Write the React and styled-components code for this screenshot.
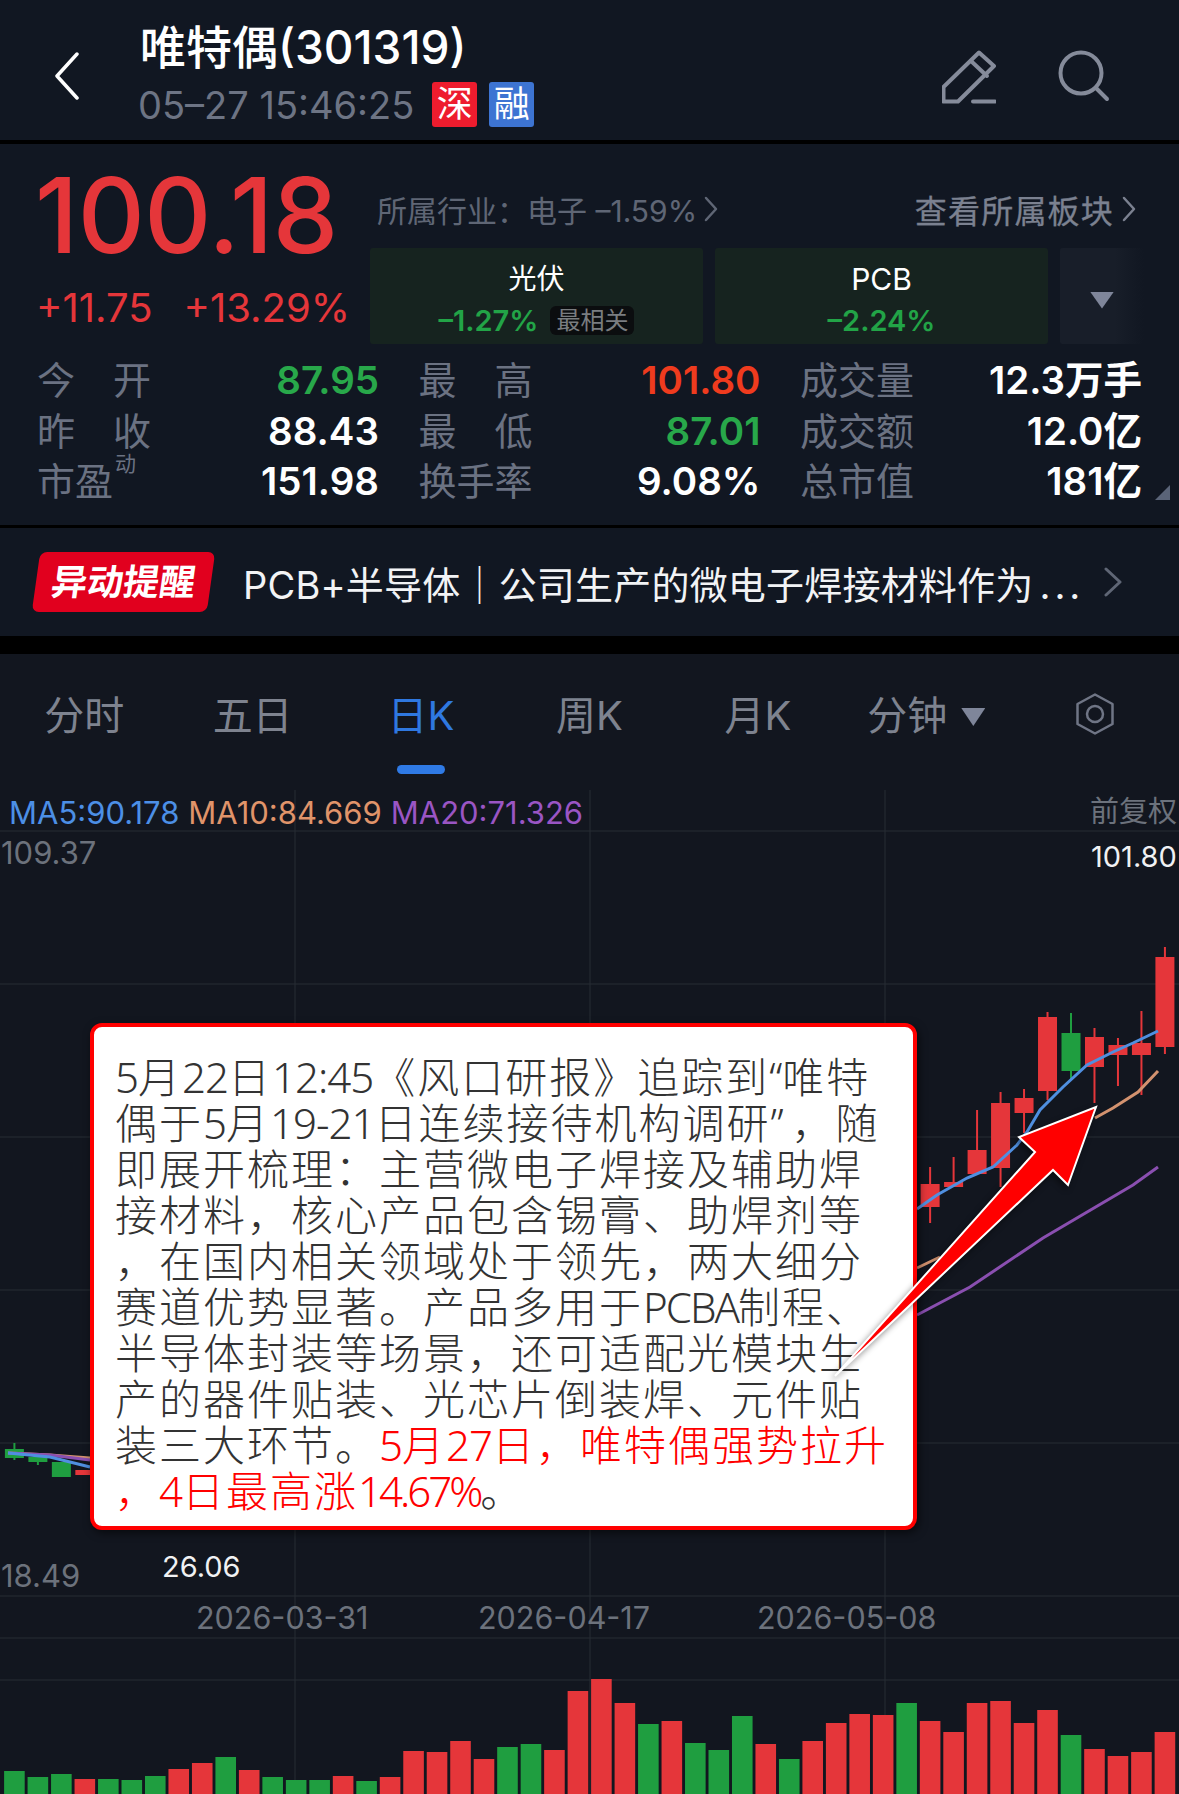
import React from 'react';
import styled, { createGlobalStyle } from 'styled-components';

const sans = `Inter, "Noto Sans CJK SC", sans-serif`;
const RED = '#e5363a';
const GREEN = '#1f9e40';

const GlobalStyle = createGlobalStyle`
  html, body { margin: 0; padding: 0; background: #000; }
  * { box-sizing: border-box; }
`;

const Page = styled.div`
  width: 1179px;
  height: 1794px;
  overflow: hidden;
  background: #000;
  font-family: ${sans};
  display: flex;
  flex-direction: column;
`;

const Header = styled.header`
  height: 140px;
  flex: none;
  background: #111722;
  display: flex;
  align-items: flex-start;
  padding: 20px 69px 0 55px;
`;

const BackIcon = styled.svg`
  width: 24px;
  height: 48px;
  margin: 32px 61px 0 0;
  flex: none;
`;

const TitleBlock = styled.div`
  display: flex;
  flex-direction: column;
  gap: 8px;
`;

const Title = styled.div`
  font-size: 46px;
  line-height: 54px;
  color: #fff;
  font-weight: 500;
  white-space: nowrap;
`;

const SubRow = styled.div`
  display: flex;
  align-items: center;
  height: 45px;
  margin-left: -2px;
`;

const Time = styled.span`
  font-size: 38px;
  color: #6d7484;
  margin-right: 18px;
  white-space: nowrap;
`;

const Badge = styled.span`
  width: 45px;
  height: 45px;
  border-radius: 3px;
  background: ${p => p.$bg};
  color: #fff;
  font-size: 36px;
  line-height: 45px;
  text-align: center;
  margin-right: 12px;
`;

const HeaderIcons = styled.div`
  margin-left: auto;
  display: flex;
  gap: 62px;
  padding-top: 30px;
`;

const IconSvg = styled.svg`
  display: block;
  fill: none;
  stroke: #858b9a;
  stroke-width: 4;
  stroke-linecap: round;
  stroke-linejoin: round;
`;

const SettingIcon = styled(IconSvg)`
  stroke: #6f7585;
  stroke-width: 2.5;
  margin-top: 1px;
`;

const Quote = styled.section`
  height: 381px;
  flex: none;
  margin-top: 4px;
  background: #111722;
  position: relative;
`;

const QuoteTop = styled.div`
  display: flex;
  height: 211px;
`;

const PriceCol = styled.div`
  width: 370px;
  flex: none;
  padding: 21px 0 0 38px;
`;

const Price = styled.div`
  font-size: 104px;
  font-weight: 500;
  line-height: 100px;
  letter-spacing: -0.5px;
  color: ${RED};
  margin-left: -3px;
`;

const ChangeRow = styled.div`
  display: flex;
  gap: 31px;
  margin: 18px 0 0 -2px;
  font-size: 40px;
  line-height: 50px;
  color: ${RED};
  white-space: nowrap;
`;

const InfoCol = styled.div`
  flex: 1;
  padding-top: 45px;
`;

const InfoRow = styled.div`
  height: 40px;
  display: flex;
  align-items: center;
  justify-content: space-between;
  padding: 0 43px 0 7px;
`;

const InfoText = styled.span`
  display: flex;
  align-items: center;
  gap: ${p => p.$gap || 10}px;
  font-size: ${p => p.$size}px;
  color: ${p => p.$color};
  letter-spacing: ${p => p.$ls || 0}px;
  -webkit-text-stroke: ${p => p.$stroke || 0}px ${p => p.$color};
  white-space: nowrap;
`;

const Tags = styled.div`
  display: flex;
  gap: 12px;
  margin-top: 19px;
`;

const Tag = styled.div`
  width: 333px;
  height: 96px;
  background: #16231f;
  border-radius: 3px;
  padding-top: 16px;
  display: flex;
  flex-direction: column;
  align-items: center;
`;

const MoreTag = styled.div`
  width: 84px;
  height: 96px;
  background: linear-gradient(90deg, #181e29 65%, #111722);
  border-radius: 3px;
  padding-top: 8px;
  display: flex;
  align-items: center;
  justify-content: center;
`;

const Caret = styled.i`
  display: block;
  width: ${p => p.$w}px;
  height: ${p => p.$h}px;
  background: #7f869a;
  clip-path: polygon(0 0, 100% 0, 50% 100%);
`;

const TabCaret = styled(Caret)`
  margin-top: 16px;
`;

const TagName = styled.div`
  font-size: ${p => p.$size || 28}px;
  line-height: 30px;
  color: #fff;
`;

const TagChangeRow = styled.div`
  display: flex;
  align-items: center;
  gap: 12px;
  height: 36px;
  margin-top: 8px;
`;

const TagChange = styled.span`
  font-size: 29px;
  font-weight: 600;
  color: #22a447;
`;

const TagBadge = styled.span`
  background: #0b0d0f;
  color: #7a7d80;
  font-size: 24px;
  line-height: 29px;
  height: 29px;
  padding: 0 6px;
  border-radius: 6px;
`;

const Stats = styled.div`
  display: grid;
  grid-template-columns: repeat(3, 342px);
  column-gap: 39.5px;
  padding-left: 37px;
`;

const Stat = styled.div`
  height: 50.5px;
  display: flex;
  align-items: center;
  justify-content: space-between;
`;

const Label = styled.span`
  width: 114px;
  font-size: 38px;
  line-height: 50px;
  color: #6b7282;
  text-align-last: justify;
  white-space: nowrap;
  display: block;
`;

const SplitLabel = styled.span`
  font-size: 38px;
  line-height: 50px;
  color: #6b7282;
  display: flex;
  white-space: nowrap;
`;

const Sup = styled.sup`
  font-size: 21px;
  line-height: 21px;
  margin: -3px 0 0 2px;
`;

const Value = styled.span`
  font-size: 38.5px;
  font-weight: 600;
  line-height: 50px;
  color: ${p => p.$color || '#fff'};
  white-space: nowrap;
`;

const CornerMark = styled.i`
  position: absolute;
  left: 1155px;
  top: 341px;
  width: 15px;
  height: 15px;
  background: #5a6478;
  clip-path: polygon(100% 0, 100% 100%, 0 100%);
`;

const Alert = styled.section`
  height: 108px;
  flex: none;
  margin-top: 3px;
  background: #111722;
  display: flex;
  align-items: center;
  padding-left: 36px;
`;

const AlertBadge = styled.div`
  width: 175px;
  height: 60px;
  background: #e1001e;
  border-radius: 7px;
  transform: skewX(-8deg);
  color: #fff;
  font-size: 36px;
  font-weight: 700;
  line-height: 60px;
  text-align: center;
  flex: none;
  margin-right: 32px;
`;

const AlertText = styled.div`
  font-size: 38px;
  letter-spacing: 0.2px;
  color: #f2f3f5;
  white-space: nowrap;
  width: 861px;
`;

const Dots = styled.span`
  letter-spacing: 4px;
  margin-left: 6px;
`;

const ChartSection = styled.section`
  flex: 1;
  margin-top: 18px;
  background: #12161f;
  display: flex;
  flex-direction: column;
`;

const TabBar = styled.nav`
  height: 136px;
  flex: none;
  display: flex;
`;

const Tab = styled.div`
  flex: 1;
  position: relative;
  padding-top: 38px;
  display: flex;
  justify-content: center;
  gap: 14px;
  font-size: 40px;
  line-height: 48px;
  color: ${p => (p.$active ? '#2f78e0' : '#7e838f')};
  white-space: nowrap;
`;

const Underline = styled.i`
  position: absolute;
  left: 50%;
  top: 111px;
  width: 48px;
  height: 9px;
  margin-left: -24px;
  border-radius: 5px;
  background: #2f7ae5;
`;

const Chart = styled.div`
  flex: 1;
  position: relative;
`;

const ChartSvg = styled.svg`
  display: block;
  width: 1179px;
  height: 1004px;
`;

const Legend = styled.div`
  position: absolute;
  left: 9px;
  top: 5px;
  display: flex;
  gap: 9px;
  font-size: 31px;
  line-height: 36px;
`;

const LegendItem = styled.span`
  color: ${p => p.$color};
`;

const ChartLabel = styled.span`
  position: absolute;
  left: ${p => p.$x}px;
  top: ${p => p.$y}px;
  font-size: ${p => p.$size || 29}px;
  line-height: 34px;
  color: ${p => p.$color || '#6c727c'};
  white-space: nowrap;
`;

const Callout = styled.div`
  position: absolute;
  left: 90px;
  top: 233px;
  width: 827px;
  height: 507px;
  background: #fff;
  border: 4px solid #ff0000;
  border-radius: 12px;
  box-shadow: 2px 3px 8px rgba(0, 0, 0, 0.55);
  padding: 25px 0 0 21px;
  font-family: "Noto Sans CJK SC", sans-serif;
  font-size: 42px;
  letter-spacing: 2px;
  line-height: 46px;
  font-weight: 300;
  color: #333;
`;

const CalloutLine = styled.div`
  height: 46px;
  white-space: nowrap;
`;

const Latin = styled.span`
  font-family: "Noto Sans", sans-serif;
  line-height: 1;
  letter-spacing: ${p => p.$ls ?? -1}px;
`;

const Hot = styled.span`
  color: #ff0000;
`;

const ArrowSvg = styled.svg`
  position: absolute;
  left: 0;
  top: 0;
  width: 1179px;
  height: 1004px;
  filter: drop-shadow(-2px 3px 3px rgba(0, 0, 0, 0.45));
`;

// index, bodyTop, bodyBottom, wickTop, wickBottom, up
const candles = [
  [0, 1449, 1458, 1443, 1460, false],
  [1, 1457, 1462, 1457, 1465, false],
  [2, 1462, 1477, 1462, 1477, false],
  [3, 1470, 1475, 1470, 1475, true],
  [39, 1184, 1207, 1167, 1223, true],
  [40, 1182, 1187, 1157, 1187, true],
  [41, 1150, 1174, 1110, 1174, true],
  [42, 1103, 1168, 1092, 1187, true],
  [43, 1098, 1113, 1089, 1133, true],
  [44, 1017, 1091, 1012, 1100, true],
  [45, 1033, 1071, 1013, 1080, false],
  [46, 1037, 1067, 1028, 1103, true],
  [47, 1045, 1055, 1038, 1086, true],
  [48, 1043, 1055, 1011, 1095, true],
  [49, 957, 1047, 947, 1054, true],
];

// r = red, g = green, top y of each volume bar
const volumes = [
  ['g', 1771], ['g', 1777], ['g', 1774], ['r', 1779], ['g', 1779], ['g', 1780], ['g', 1776], ['r', 1769],
  ['r', 1763], ['g', 1757], ['r', 1770], ['g', 1777], ['g', 1780], ['g', 1780], ['r', 1776], ['g', 1781],
  ['r', 1777], ['r', 1751], ['r', 1752], ['r', 1741], ['r', 1759], ['g', 1747], ['g', 1744], ['r', 1750],
  ['r', 1691], ['r', 1679], ['r', 1703], ['g', 1724], ['r', 1721], ['g', 1743], ['g', 1750], ['g', 1716],
  ['r', 1744], ['g', 1759], ['r', 1741], ['r', 1723], ['r', 1714], ['r', 1715], ['g', 1703], ['r', 1721],
  ['r', 1732], ['r', 1703], ['r', 1701], ['r', 1723], ['r', 1710], ['g', 1735], ['r', 1749], ['r', 1756],
  ['r', 1752], ['r', 1732],
];

const ma5 = 'M8 1453 L50 1457 L90 1467 M917 1209 L937 1195 L967 1178 L993 1167 L1017 1145 L1027 1132 L1040 1110 L1063 1087 L1087 1065 L1113 1052 L1133 1043 L1158 1031';
const ma10 = 'M8 1453 L50 1455 L90 1458 M917 1268 L940 1257 M1095 1118 L1113 1108 L1138 1092 L1158 1071';
const ma20 = 'M8 1453 L50 1455 L90 1460 M917 1315 L970 1287 L1043 1238 L1133 1185 L1158 1167';

const candleX = i => 14.4 + 23.48 * i;

const hGrid = [831, 984, 1137, 1290, 1443, 1596, 1638, 1680];
const vGrid = [295, 590, 885];

function ChartDrawing() {
  return (
    <ChartSvg viewBox="0 790 1179 1004">
      {hGrid.map(y => (
        <line key={y} x1="0" x2="1179" y1={y} y2={y} stroke="#272c35" strokeWidth="1" />
      ))}
      {vGrid.map(x => (
        <line key={x} x1={x} x2={x} y1="790" y2="1794" stroke="#272c35" strokeWidth="1" />
      ))}
      {volumes.map(([c, top], i) => (
        <rect
          key={i}
          x={candleX(i) - 10.3}
          y={top}
          width="20.6"
          height={1794 - top}
          fill={c === 'r' ? RED : GREEN}
        />
      ))}
      {candles.map(([i, bt, bb, wt, wb, up]) => {
        const color = up ? RED : GREEN;
        return (
          <g key={i} fill={color}>
            <rect x={candleX(i) - 1} y={wt} width="2" height={wb - wt} />
            <rect x={candleX(i) - 9.5} y={bt} width="19" height={bb - bt} />
          </g>
        );
      })}
      <path d={ma10} fill="none" stroke="#d3926f" strokeWidth="3" />
      <path d={ma20} fill="none" stroke="#8a4fb0" strokeWidth="3" />
      <path d={ma5} fill="none" stroke="#4f8fe0" strokeWidth="3" />
    </ChartSvg>
  );
}

const Chevron = ({ w = 14, h = 26, color = '#5f6675', sw = 2.5 }) => (
  <svg width={w} height={h} viewBox={`0 0 ${w} ${h}`} fill="none" stroke={color} strokeWidth={sw} strokeLinecap="round" strokeLinejoin="round">
    <path d={`M2 2 L${w - 2} ${h / 2} L2 ${h - 2}`} />
  </svg>
);

export default function App() {
  return (
    <Page>
      <GlobalStyle />
      <Header>
        <BackIcon viewBox="0 0 24 48" fill="none" stroke="#fff" strokeWidth="3.5" strokeLinecap="round" strokeLinejoin="round">
          <path d="M22 2 L2 24 L22 46" />
        </BackIcon>
        <TitleBlock>
          <Title>唯特偶(301319)</Title>
          <SubRow>
            <Time>05–27 15:46:25</Time>
            <Badge $bg="#ee1c2e">深</Badge>
            <Badge $bg="#3d74d2">融</Badge>
          </SubRow>
        </TitleBlock>
        <HeaderIcons>
          <IconSvg width="54" height="54" viewBox="0 0 54 54">
            <path d="M1.5 51.5 V37 L37 2.5 L52 16 L16 51.5 Z" />
            <path d="M29 11 L45 26" />
            <path d="M31 51.5 H53" />
          </IconSvg>
          <IconSvg width="52" height="52" viewBox="0 0 52 52">
            <circle cx="23" cy="23" r="20.5" />
            <path d="M38 38 L49 49" />
          </IconSvg>
        </HeaderIcons>
      </Header>

      <Quote>
        <QuoteTop>
          <PriceCol>
            <Price>100.18</Price>
            <ChangeRow>
              <span>+11.75</span>
              <span>+13.29%</span>
            </ChangeRow>
          </PriceCol>
          <InfoCol>
            <InfoRow>
              <InfoText $size={30} $color="#5f6675" $gap={7}>
                <span>所属行业：电子 –1.59%</span>
                <Chevron color="#5f6675" />
              </InfoText>
              <InfoText $size={32} $color="#7b8190" $gap={8} $ls={1.2} $stroke={0.3}>
                <span>查看所属板块</span>
                <Chevron color="#7b8190" />
              </InfoText>
            </InfoRow>
            <Tags>
              <Tag>
                <TagName>光伏</TagName>
                <TagChangeRow>
                  <TagChange>–1.27%</TagChange>
                  <TagBadge>最相关</TagBadge>
                </TagChangeRow>
              </Tag>
              <Tag>
                <TagName $size={30}>PCB</TagName>
                <TagChangeRow>
                  <TagChange>–2.24%</TagChange>
                </TagChangeRow>
              </Tag>
              <MoreTag>
                <Caret $w={24} $h={17} />
              </MoreTag>
            </Tags>
          </InfoCol>
        </QuoteTop>
        <Stats>
          <Stat><Label>今 开</Label><Value $color="#28a84a">87.95</Value></Stat>
          <Stat><Label>最 高</Label><Value $color="#ef3b1e">101.80</Value></Stat>
          <Stat><Label>成交量</Label><Value>12.3万手</Value></Stat>
          <Stat><Label>昨 收</Label><Value>88.43</Value></Stat>
          <Stat><Label>最 低</Label><Value $color="#28a84a">87.01</Value></Stat>
          <Stat><Label>成交额</Label><Value>12.0亿</Value></Stat>
          <Stat><SplitLabel>市盈<Sup>动</Sup></SplitLabel><Value>151.98</Value></Stat>
          <Stat><Label>换手率</Label><Value>9.08%</Value></Stat>
          <Stat><Label>总市值</Label><Value>181亿</Value></Stat>
        </Stats>
        <CornerMark />
      </Quote>

      <Alert>
        <AlertBadge>异动提醒</AlertBadge>
        <AlertText>PCB+半导体｜公司生产的微电子焊接材料作为<Dots>...</Dots></AlertText>
        <Chevron w={18} h={30} color="#5f6675" sw={3} />
      </Alert>

      <ChartSection>
        <TabBar>
          <Tab>分时</Tab>
          <Tab>五日</Tab>
          <Tab $active>日K<Underline /></Tab>
          <Tab>周K</Tab>
          <Tab>月K</Tab>
          <Tab>分钟<TabCaret $w={24} $h={18} /></Tab>
          <Tab>
            <SettingIcon width="38" height="42" viewBox="0 0 38 42">
              <path d="M19 1.5 L36.5 11 V31 L19 40.5 L1.5 31 V11 Z" />
              <circle cx="19" cy="21" r="8" />
            </SettingIcon>
          </Tab>
        </TabBar>
        <Chart>
          <ChartDrawing />
          <Legend>
            <LegendItem $color="#4c8fe6">MA5:90.178</LegendItem>
            <LegendItem $color="#e0946a">MA10:84.669</LegendItem>
            <LegendItem $color="#9a55c4">MA20:71.326</LegendItem>
          </Legend>
          <ChartLabel $x={1090} $y={5}>前复权</ChartLabel>
          <ChartLabel $x={1} $y={46} $size={31}>109.37</ChartLabel>
          <ChartLabel $x={1091} $y={50} $color="#f0f1f3">101.80</ChartLabel>
          <ChartLabel $x={1} $y={769} $size={31}>18.49</ChartLabel>
          <ChartLabel $x={162} $y={760} $color="#f0f1f3">26.06</ChartLabel>
          <ChartLabel $x={196} $y={811} $size={30.5}>2026-03-31</ChartLabel>
          <ChartLabel $x={478} $y={811} $size={30.5}>2026-04-17</ChartLabel>
          <ChartLabel $x={757} $y={811} $size={30.5}>2026-05-08</ChartLabel>
          <Callout>
            <CalloutLine><Latin>5</Latin>月<Latin>22</Latin>日<Latin>12:45</Latin>《风口研报》追踪到<Latin $ls={0}>“</Latin>唯特</CalloutLine>
            <CalloutLine>偶于<Latin>5</Latin>月<Latin>19-21</Latin>日连续接待机构调研<Latin $ls={8}>”</Latin>，随</CalloutLine>
            <CalloutLine>即展开梳理：主营微电子焊接及辅助焊</CalloutLine>
            <CalloutLine>接材料，核心产品包含锡膏、助焊剂等</CalloutLine>
            <CalloutLine>，在国内相关领域处于领先，两大细分</CalloutLine>
            <CalloutLine>赛道优势显著。产品多用于<Latin $ls={-2}>PCBA</Latin>制程、</CalloutLine>
            <CalloutLine>半导体封装等场景，还可适配光模块生</CalloutLine>
            <CalloutLine>产的器件贴装、光芯片倒装焊、元件贴</CalloutLine>
            <CalloutLine>装三大环节。<Hot><Latin>5</Latin>月<Latin>27</Latin>日，唯特偶强势拉升</Hot></CalloutLine>
            <CalloutLine><Hot>，<Latin>4</Latin>日最高涨<Latin $ls={-3}>14.67%</Latin></Hot>。</CalloutLine>
          </Callout>
          <ArrowSvg viewBox="0 790 1179 1004">
            <path d="M835 1376 L1035 1152 L1019 1137 L1096 1107 L1068 1185 L1053 1170 Z" fill="#ff0000" stroke="#fff" strokeWidth="2" strokeLinejoin="miter" />
          </ArrowSvg>
        </Chart>
      </ChartSection>
    </Page>
  );
}
